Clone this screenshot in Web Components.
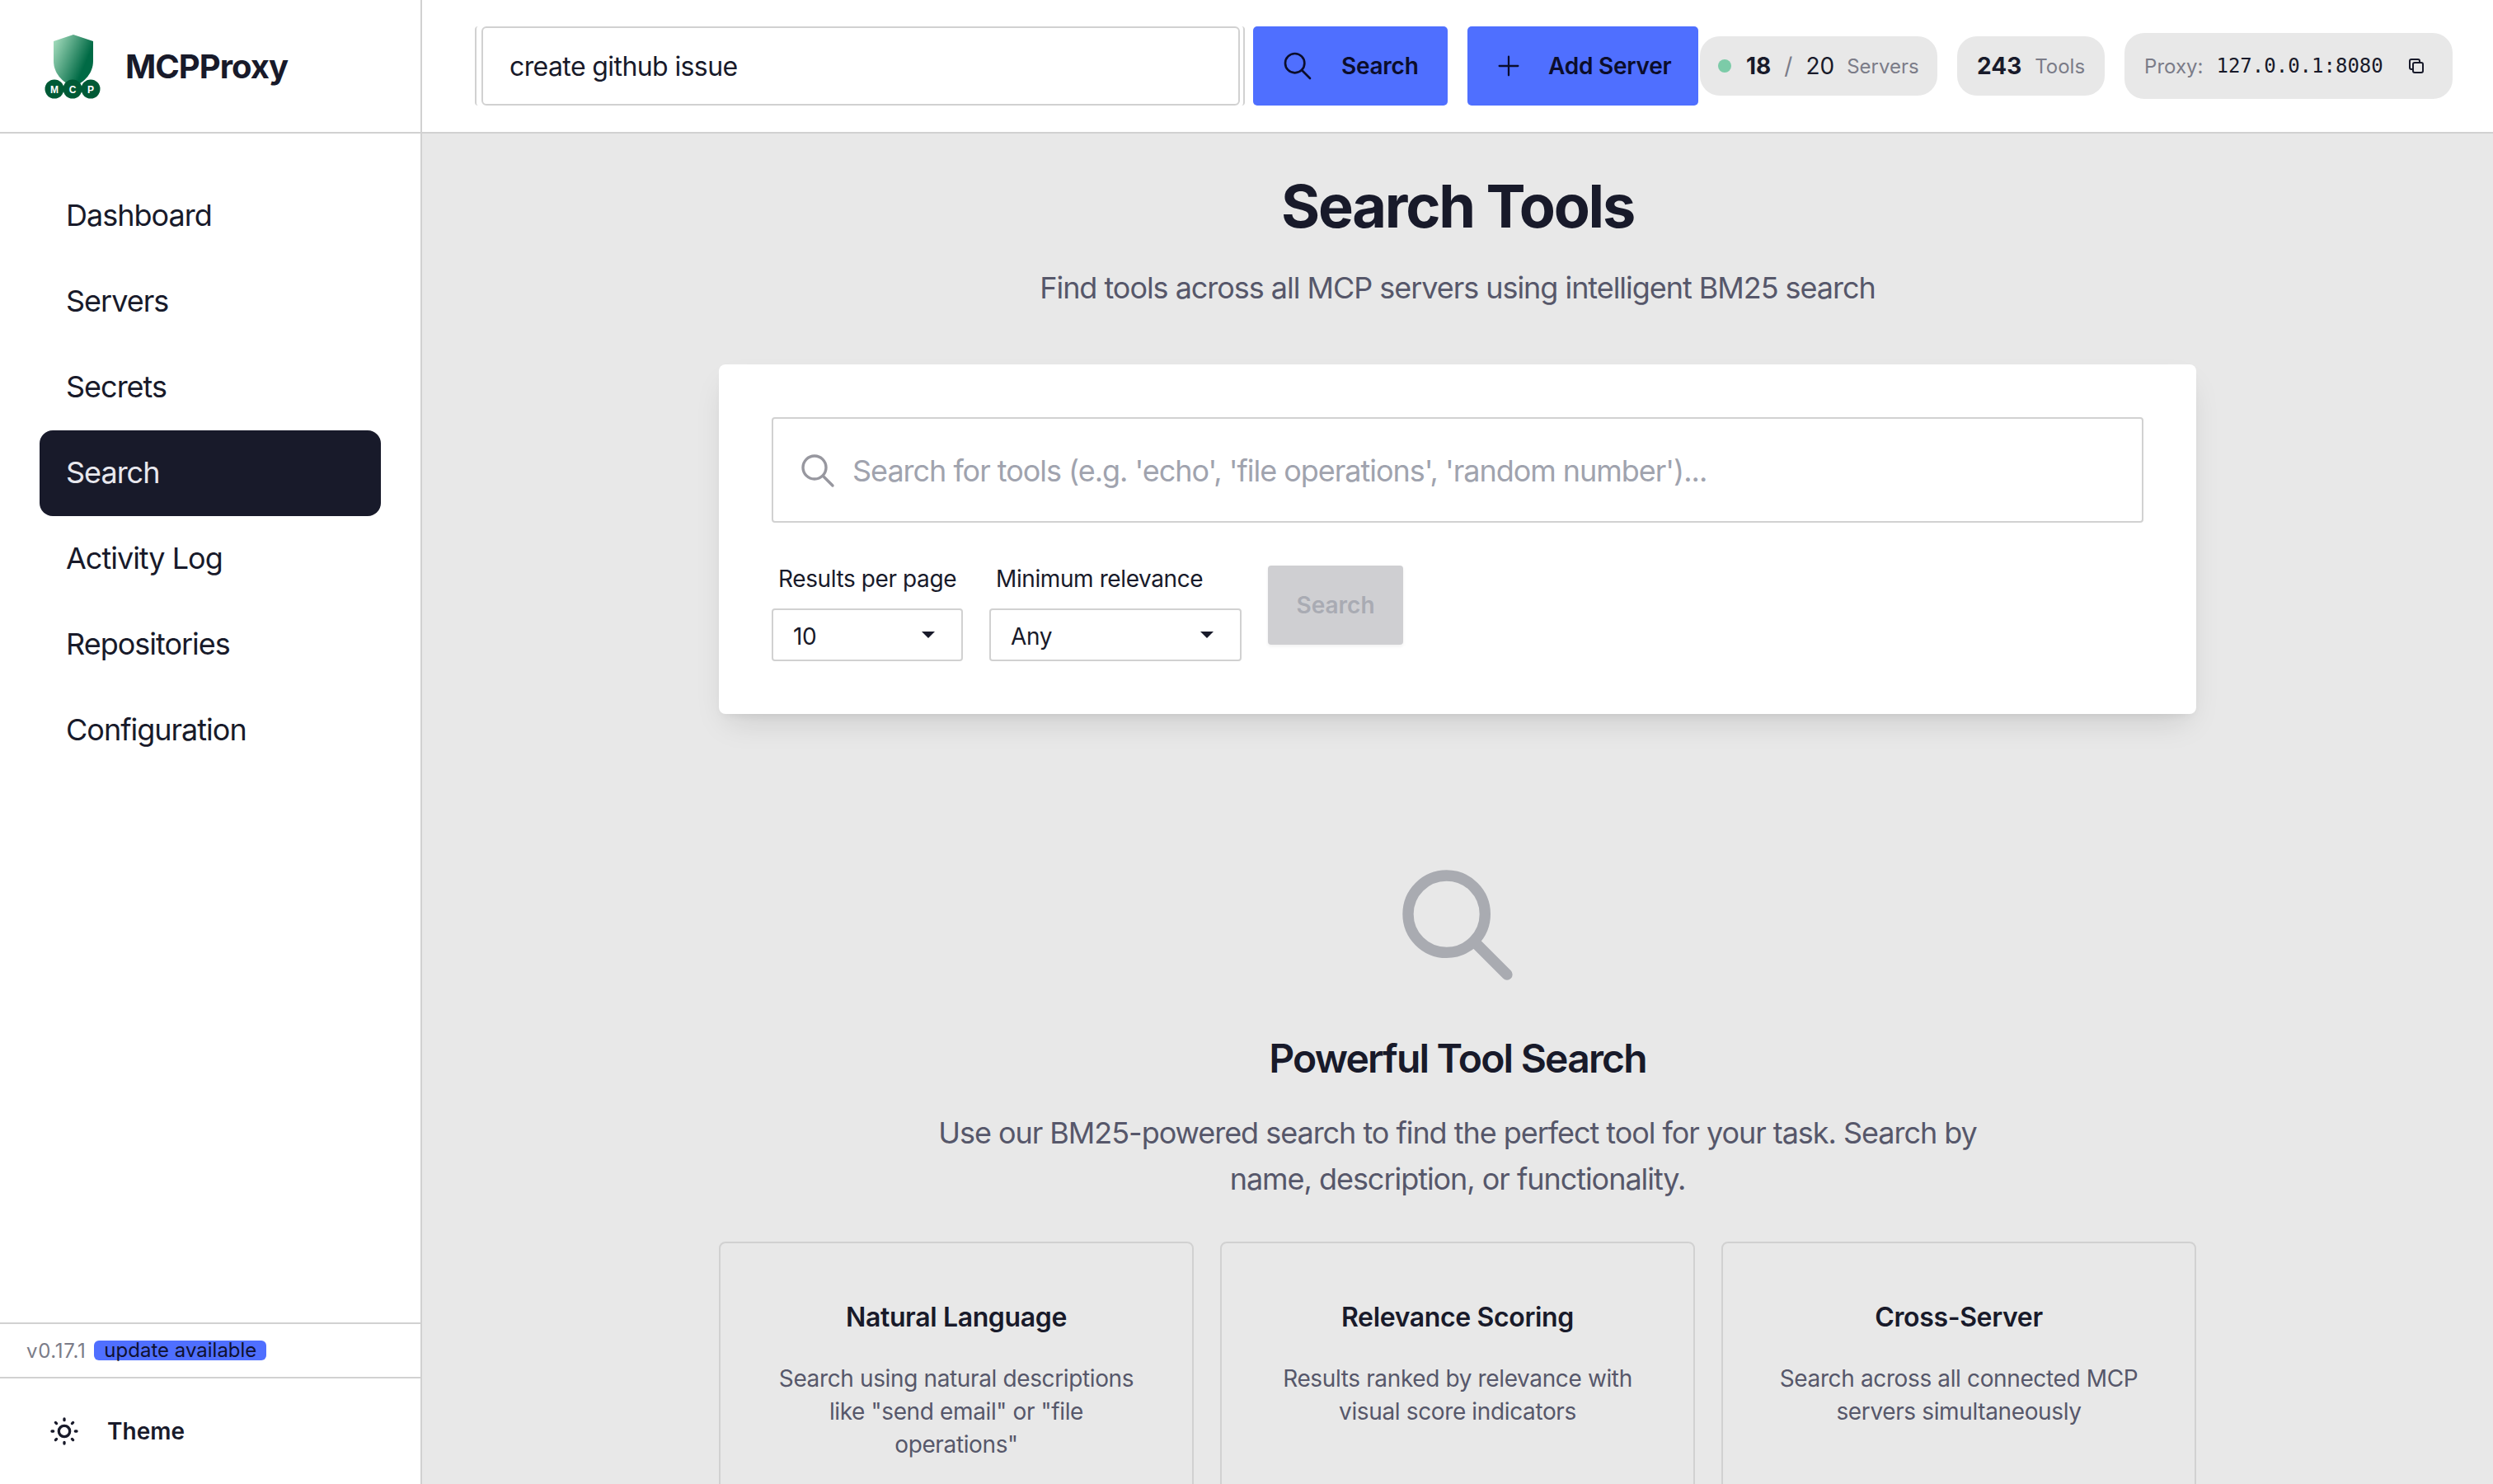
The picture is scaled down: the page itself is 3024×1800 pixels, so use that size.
<!DOCTYPE html>
<html lang="en">
<head>
<meta charset="utf-8">
<title>MCPProxy</title>
<style>
    html, body {
        margin: 0;
        height: 100%;
        overflow: hidden;
        background: #e8e8e8;
        color: #181a2a;
        font-family: Inter, "Liberation Sans", sans-serif;
    }
</style>
</head>
<body>
<app-shell>
    <side-bar slot="side">
        <nav-item>Dashboard</nav-item>
        <nav-item>Servers</nav-item>
        <nav-item>Secrets</nav-item>
        <nav-item active>Search</nav-item>
        <nav-item>Activity Log</nav-item>
        <nav-item>Repositories</nav-item>
        <nav-item>Configuration</nav-item>
    </side-bar>
    <top-bar slot="top"></top-bar>
    <search-page>
        <feature-card heading="Natural Language">Search using natural descriptions like "send email" or "file operations"</feature-card>
        <feature-card heading="Relevance Scoring">Results ranked by relevance with visual score indicators</feature-card>
        <feature-card heading="Cross-Server">Search across all connected MCP servers simultaneously</feature-card>
    </search-page>
</app-shell>

<script>
// === Shared icons ===
const searchIcon = (size, width = 2) => `
    <svg width="${size}" height="${size}" viewBox="0 0 24 24" fill="none" stroke="currentColor" stroke-width="${width}" stroke-linecap="round" stroke-linejoin="round">
        <path d="M21 21l-6-6m2-5a7 7 0 11-14 0 7 7 0 0114 0z"/>
    </svg>`;

const define = (name, html, Base = HTMLElement) => {
    const template = document.createElement('template');
    template.innerHTML = html;
    customElements.define(name, class extends Base {
        constructor() {
            super();
            this.attachShadow({ mode: 'open' });
            this.shadowRoot.appendChild(template.content.cloneNode(true));
        }
    });
};

// === Page frame ===
define('app-shell', `
    <style>
        :host {
            display: grid;
            grid-template-columns: 512px 1fr;
            grid-template-rows: 162px 1638px;
            width: 3024px;
            height: 1800px;
            overflow: hidden;
        }
        .side { grid-row: 1 / 3; display: flex; }
        .top { display: flex; }
        .main { overflow: hidden; }
    </style>
    <div class="side"><slot name="side"></slot></div>
    <div class="top"><slot name="top"></slot></div>
    <div class="main"><slot></slot></div>
`);

// === Sidebar ===
define('nav-item', `
    <style>
        :host {
            display: flex;
            align-items: center;
            box-sizing: border-box;
            height: 104px;
            padding: 0 32px 2px;
            border-radius: 16px;
            font-size: 36px;
            letter-spacing: -1px;
            color: #181a2a;
        }
        :host([active]) {
            background: #181a2a;
            color: #e8e8ee;
        }
    </style>
    <slot></slot>
`);

define('side-bar', `
    <style>
        :host {
            display: flex;
            flex-direction: column;
            box-sizing: border-box;
            width: 512px;
            height: 1800px;
            background: #fff;
            border-right: 2px solid #d1d1d1;
        }
        .brand {
            display: flex;
            align-items: center;
            gap: 22px;
            box-sizing: border-box;
            height: 162px;
            padding-left: 54px;
            border-bottom: 2px solid #d1d1d1;
            font-size: 40px;
            font-weight: 700;
            letter-spacing: -1px;
        }
        nav {
            flex: 1;
            display: flex;
            flex-direction: column;
            padding: 48px 48px 0;
        }
        .version {
            display: flex;
            align-items: center;
            gap: 10px;
            box-sizing: border-box;
            height: 68px;
            padding: 0 32px;
            border-top: 2px solid #d1d1d1;
            border-bottom: 2px solid #d1d1d1;
            font-size: 24px;
            color: #7b7c88;
        }
        .version-num { letter-spacing: 0.65px; }
        .badge {
            height: 24px;
            line-height: 24px;
            padding: 0 12px;
            border-radius: 6px;
            background: #4f6fff;
            color: #0f1130;
        }
        .theme {
            display: flex;
            align-items: center;
            gap: 32px;
            height: 128px;
            padding-left: 58px;
            font-size: 28px;
            font-weight: 600;
        }
        svg text {
            font-family: "Liberation Sans", sans-serif;
            font-size: 12px;
            font-weight: 700;
            letter-spacing: 0;
            fill: #fff;
            text-anchor: middle;
        }
    </style>
    <div class="brand">
        <svg width="76" height="80" viewBox="54 38 76 80">
            <defs>
                <linearGradient id="shield" x1="0" y1="0" x2="1" y2="0.55">
                    <stop offset="0" stop-color="#aee3c4"/>
                    <stop offset="0.85" stop-color="#006a45"/>
                </linearGradient>
            </defs>
            <path d="M89 40l24 8v24c0 14-10 26-24 31c-14-5-24-17-24-31V48z" fill="url(#shield)"/>
            <circle cx="66" cy="106" r="11.5" fill="#005a36"/>
            <circle cx="88" cy="106" r="11.5" fill="#005a36"/>
            <circle cx="110" cy="106" r="11.5" fill="#005a36"/>
            <text x="66" y="110.5">M</text>
            <text x="88" y="110.5">C</text>
            <text x="110" y="110.5">P</text>
        </svg>
        <span>MCPProxy</span>
    </div>
    <nav><slot></slot></nav>
    <div class="version"><span class="version-num">v0.17.1</span><span class="badge">update available</span></div>
    <div class="theme">
        <svg width="40" height="40" viewBox="0 0 24 24" fill="none" stroke="currentColor" stroke-width="2" stroke-linecap="round" stroke-linejoin="round">
            <path d="M12 3v1m0 16v1m9-9h-1M4 12H3m15.364 6.364l-.707-.707M6.343 6.343l-.707-.707m12.728 0l-.707.707M6.343 17.657l-.707.707M16 12a4 4 0 11-8 0 4 4 0 018 0z"/>
        </svg>
        <span>Theme</span>
    </div>
`);

// === Top bar ===
define('top-button', `
    <style>
        :host {
            display: flex;
            align-items: center;
            gap: var(--gap, 24px);
            box-sizing: border-box;
            height: 96px;
            padding: 0 var(--pad, 32px);
            border-radius: 5px;
            background: #4f6fff;
            color: #0b0d2b;
            font-size: 28px;
            font-weight: 600;
            letter-spacing: -0.25px;
            white-space: nowrap;
        }
        ::slotted(svg) { flex: none; }
    </style>
    <slot></slot>
`);

define('stat-pill', `
    <style>
        :host {
            display: flex;
            align-items: center;
            box-sizing: border-box;
            height: 72px;
            padding: 0 24px;
            border-radius: 24px;
            background: #e8e8e8;
            font-size: 28px;
            white-space: pre;
        }
    </style>
    <slot></slot>
`);

define('top-bar', `
    <style>
        :host {
            display: flex;
            align-items: center;
            box-sizing: border-box;
            width: 2512px;
            height: 162px;
            padding: 0 48px 0 64px;
            background: #fff;
            border-bottom: 2px solid #d1d1d1;
        }
        .search-box {
            display: flex;
            box-sizing: border-box;
            width: 934px;
            height: 96px;
            padding: 0 4px 0 6px;
            border: 2px solid #d1d1d1;
            border-top: 0;
            border-bottom: 0;
            border-radius: 4px;
        }
        .search-box div {
            flex: 1;
            display: flex;
            align-items: center;
            padding-left: 32px;
            border: 2px solid #d1d1d1;
            border-radius: 6px;
            font-size: 32px;
            letter-spacing: -0.6px;
        }
        .search-btn { margin-left: 10px; width: 236px; --gap: 33px; --pad: 34px; }
        .add-btn { margin-left: 24px; width: 280px; margin-right: 2px; --gap: 31px; --pad: 33px; }
        .bold { font-weight: 700; }
        .muted { color: #7b7c88; font-size: 24px; }
        .dot { flex: none; width: 16px; height: 16px; border-radius: 50%; background: #7ccba8; margin-right: 18px; }
        .slash { color: #7b7c88; font-weight: 400; margin: 0 16px; }
        .num { font-weight: 400; }
        .servers { width: 288px; padding-left: 22px; padding-right: 0; }
        .proxy { margin-left: 24px; height: 80px; width: 398px; }
        .mono { font-family: "DejaVu Sans Mono", "Liberation Mono", monospace; font-size: 24px; margin-left: 16px; color: #181a2a; }
        .copy { margin-left: 28px; }
    </style>
    <div class="search-box"><div>create github issue</div></div>
    <top-button class="search-btn">${searchIcon(40, 1.6)}<span>Search</span></top-button>
    <top-button class="add-btn">
        <svg width="34" height="34" viewBox="0 0 24 24" fill="none" stroke="currentColor" stroke-width="1.6" stroke-linecap="round"><path d="M12 4v16m8-8H4"/></svg>
        <span>Add Server</span>
    </top-button>
    <stat-pill class="servers">
        <span class="dot"></span><span class="bold">18</span><span class="slash">/</span><span class="num">20</span><span class="muted" style="margin-left:15px">Servers</span>
    </stat-pill>
    <stat-pill style="margin-left:24px">
        <span class="bold">243</span><span class="muted" style="margin-left:16px">Tools</span>
    </stat-pill>
    <stat-pill class="proxy">
        <span class="muted">Proxy:</span><span class="mono">127.0.0.1:8080</span>
        <svg class="copy" width="24" height="24" viewBox="0 0 24 24" fill="none" stroke="#181a2a" stroke-width="2" stroke-linecap="round" stroke-linejoin="round">
            <path d="M8 16H6a2 2 0 01-2-2V6a2 2 0 012-2h8a2 2 0 012 2v2m-6 12h8a2 2 0 002-2v-8a2 2 0 00-2-2h-8a2 2 0 00-2 2v8a2 2 0 002 2z"/>
        </svg>
    </stat-pill>
`);

// === Search form ===
define('select-box', `
    <style>
        :host {
            display: flex;
            flex-direction: column;
            font-size: 28px;
            letter-spacing: -0.4px;
            text-align: left;
        }
        label {
            height: 40px;
            line-height: 40px;
            padding-left: 8px;
            margin-bottom: 16px;
            white-space: nowrap;
        }
        .box {
            display: flex;
            align-items: center;
            justify-content: space-between;
            box-sizing: border-box;
            height: 64px;
            width: var(--w);
            padding: 0 32px 0 24px;
            background: #fff;
            border: 2px solid #d1d1d1;
            border-radius: 4px;
        }
        .value { padding-top: 4px; }
        i {
            width: 0;
            height: 0;
            border-left: 8px solid transparent;
            border-right: 8px solid transparent;
            border-top: 8px solid #181a2a;
        }
    </style>
    <label><slot name="label"></slot></label>
    <div class="box"><span class="value"><slot></slot></span><i></i></div>
`);

define('search-form', `
    <style>
        :host {
            display: block;
            box-sizing: border-box;
            width: 1792px;
            padding: 64px;
            background: #fff;
            border-radius: 8px;
            box-shadow: 0 18px 36px -10px rgba(0, 0, 0, .13), 0 6px 12px -6px rgba(0, 0, 0, .08);
        }
        .query {
            display: flex;
            align-items: center;
            gap: 18px;
            box-sizing: border-box;
            height: 128px;
            padding: 2px 0 0 30px;
            border: 2px solid #d1d1d1;
            border-radius: 4px;
            font-size: 36px;
            letter-spacing: -1.03px;
            color: #a0a3ae;
        }
        .query svg { color: #97979f; flex: none; }
        .filters {
            display: flex;
            align-items: flex-start;
            gap: 32px;
            margin-top: 48px;
        }
        .go {
            display: flex;
            align-items: center;
            justify-content: center;
            width: 164px;
            height: 96px;
            margin-top: 4px;
            border-radius: 4px;
            background: #cfcfd2;
            color: #a9abb3;
            font-size: 28px;
            font-weight: 600;
            box-shadow: 0 2px 4px rgba(0, 0, 0, .06);
        }
    </style>
    <div class="query">${searchIcon(48, 1.7)}<span>Search for tools (e.g. 'echo', 'file operations', 'random number')...</span></div>
    <div class="filters">
        <select-box style="--w:232px"><span slot="label">Results per page</span>10</select-box>
        <select-box style="--w:306px"><span slot="label">Minimum relevance</span>Any</select-box>
        <div class="go">Search</div>
    </div>
`);

// === Empty state cards ===
const featureTemplate = document.createElement('template');
featureTemplate.innerHTML = `
    <style>
        :host {
            display: block;
            box-sizing: border-box;
            padding: 66px 64px 64px;
            border: 2px solid #d1d1d1;
            border-radius: 8px;
            text-align: center;
        }
        h3 {
            margin: 0 0 30px;
            font-size: 32px;
            line-height: 48px;
            font-weight: 600;
            letter-spacing: -0.36px;
            color: #181a2a;
        }
        p {
            margin: 0;
            font-size: 28px;
            line-height: 40px;
            letter-spacing: -0.37px;
            color: #56576a;
        }
    </style>
    <h3></h3>
    <p><slot></slot></p>
`;

class FeatureCard extends HTMLElement {
    constructor() {
        super();
        this.attachShadow({ mode: 'open' });
        this.shadowRoot.appendChild(featureTemplate.content.cloneNode(true));
    }

    connectedCallback() {
        this.shadowRoot.querySelector('h3').textContent = this.getAttribute('heading');
    }
}
customElements.define('feature-card', FeatureCard);

define('search-page', `
    <style>
        :host {
            display: flex;
            flex-direction: column;
            align-items: center;
            box-sizing: border-box;
            height: 1638px;
            padding-top: 48px;
            text-align: center;
        }
        h1 {
            margin: 0 0 31px;
            font-size: 72px;
            line-height: 80px;
            font-weight: 700;
            letter-spacing: -2.25px;
        }
        .sub, .lead {
            margin: 0;
            font-size: 36px;
            line-height: 56px;
            letter-spacing: -1.04px;
            color: #56576a;
        }
        search-form { margin-top: 65px; }
        .empty-icon { margin-top: 176px; color: #a9abb1; display: block; }
        h2 {
            margin: 46px 0 0;
            font-size: 48px;
            line-height: 64px;
            font-weight: 600;
            letter-spacing: -1.8px;
        }
        .lead { width: 1344px; margin-top: 30px; }
        .features {
            display: grid;
            grid-template-columns: repeat(3, 1fr);
            gap: 32px;
            width: 1792px;
            margin-top: 48px;
        }
    </style>
    <h1>Search Tools</h1>
    <p class="sub">Find tools across all MCP servers using intelligent BM25 search</p>
    <search-form></search-form>
    <div class="empty-icon">${searchIcon(160)}</div>
    <h2>Powerful Tool Search</h2>
    <p class="lead">Use our BM25-powered search to find the perfect tool for your task. Search by name, description, or functionality.</p>
    <div class="features"><slot></slot></div>
`);
</script>
</body>
</html>
